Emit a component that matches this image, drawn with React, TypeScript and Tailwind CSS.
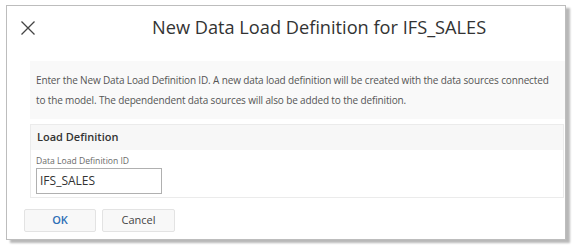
export default function App() {
  return (
    <div className="w-[577px] h-[246px] bg-white pl-[6px] pt-[5px] font-['Open_Sans',sans-serif]">
      <div className="w-[560px] h-[235px] border border-[#bdbdbd] bg-white shadow-[4px_3px_2px_rgba(0,0,0,0.28)] flex flex-col">
        {/* header */}
        <div className="h-[55px] flex items-center">
          <svg className="ml-[13px] mt-[-12px]" width="16" height="16" viewBox="0 0 16 16">
            <path d="M1.5 1.5 L14.5 14.5 M14.5 1.5 L1.5 14.5" stroke="#444" strokeWidth="1.3" fill="none" />
          </svg>
          <div className="ml-[116px] mt-[-12px] text-[18.2px] text-[#333] leading-none">
            New Data Load Definition for IFS_SALES
          </div>
        </div>

        {/* info text */}
        <div className="ml-[23px] bg-[#f9f9f9] h-[58px] pl-[6px] pt-[9px] text-[10px] tracking-[-0.14px] leading-[20px] text-[#555] whitespace-nowrap">
          <p>
            Enter the New Data Load Definition ID. A new data load definition will be created with the data sources connected
          </p>
          <p>to the model. The dependendent data sources will also be added to the definition.</p>
        </div>

        {/* section */}
        <div className="ml-[23px] mt-[5px] mr-[1px] h-[74px] border border-[#ebebeb]">
          <div className="h-[25px] bg-[#f7f7f7] pl-[6px] flex items-center text-[11px] font-semibold text-[#333]">
            Load Definition
          </div>
          <div className="pl-[5px] pt-[4px]">
            <div className="text-[8.6px] leading-[14px] text-[#6a6a6a]">Data Load Definition ID</div>
            <div className="w-[126px] h-[26px] border border-[#b0b0b0] flex items-center pl-[3px] text-[12px] text-[#333]">
              IFS_SALES
            </div>
          </div>
        </div>

        {/* buttons */}
        <div className="flex gap-[6px] ml-[17px] mt-[11px]">
          <button className="w-[72px] h-[23px] bg-[#f8f8f8] border border-[#e3e3e3] rounded-[2px] text-[11px] font-semibold text-[#2d6fb6]">
            OK
          </button>
          <button className="w-[73px] h-[23px] bg-[#f8f8f8] border border-[#e3e3e3] rounded-[2px] text-[11px] text-[#444]">
            Cancel
          </button>
        </div>
      </div>
    </div>
  );
}
